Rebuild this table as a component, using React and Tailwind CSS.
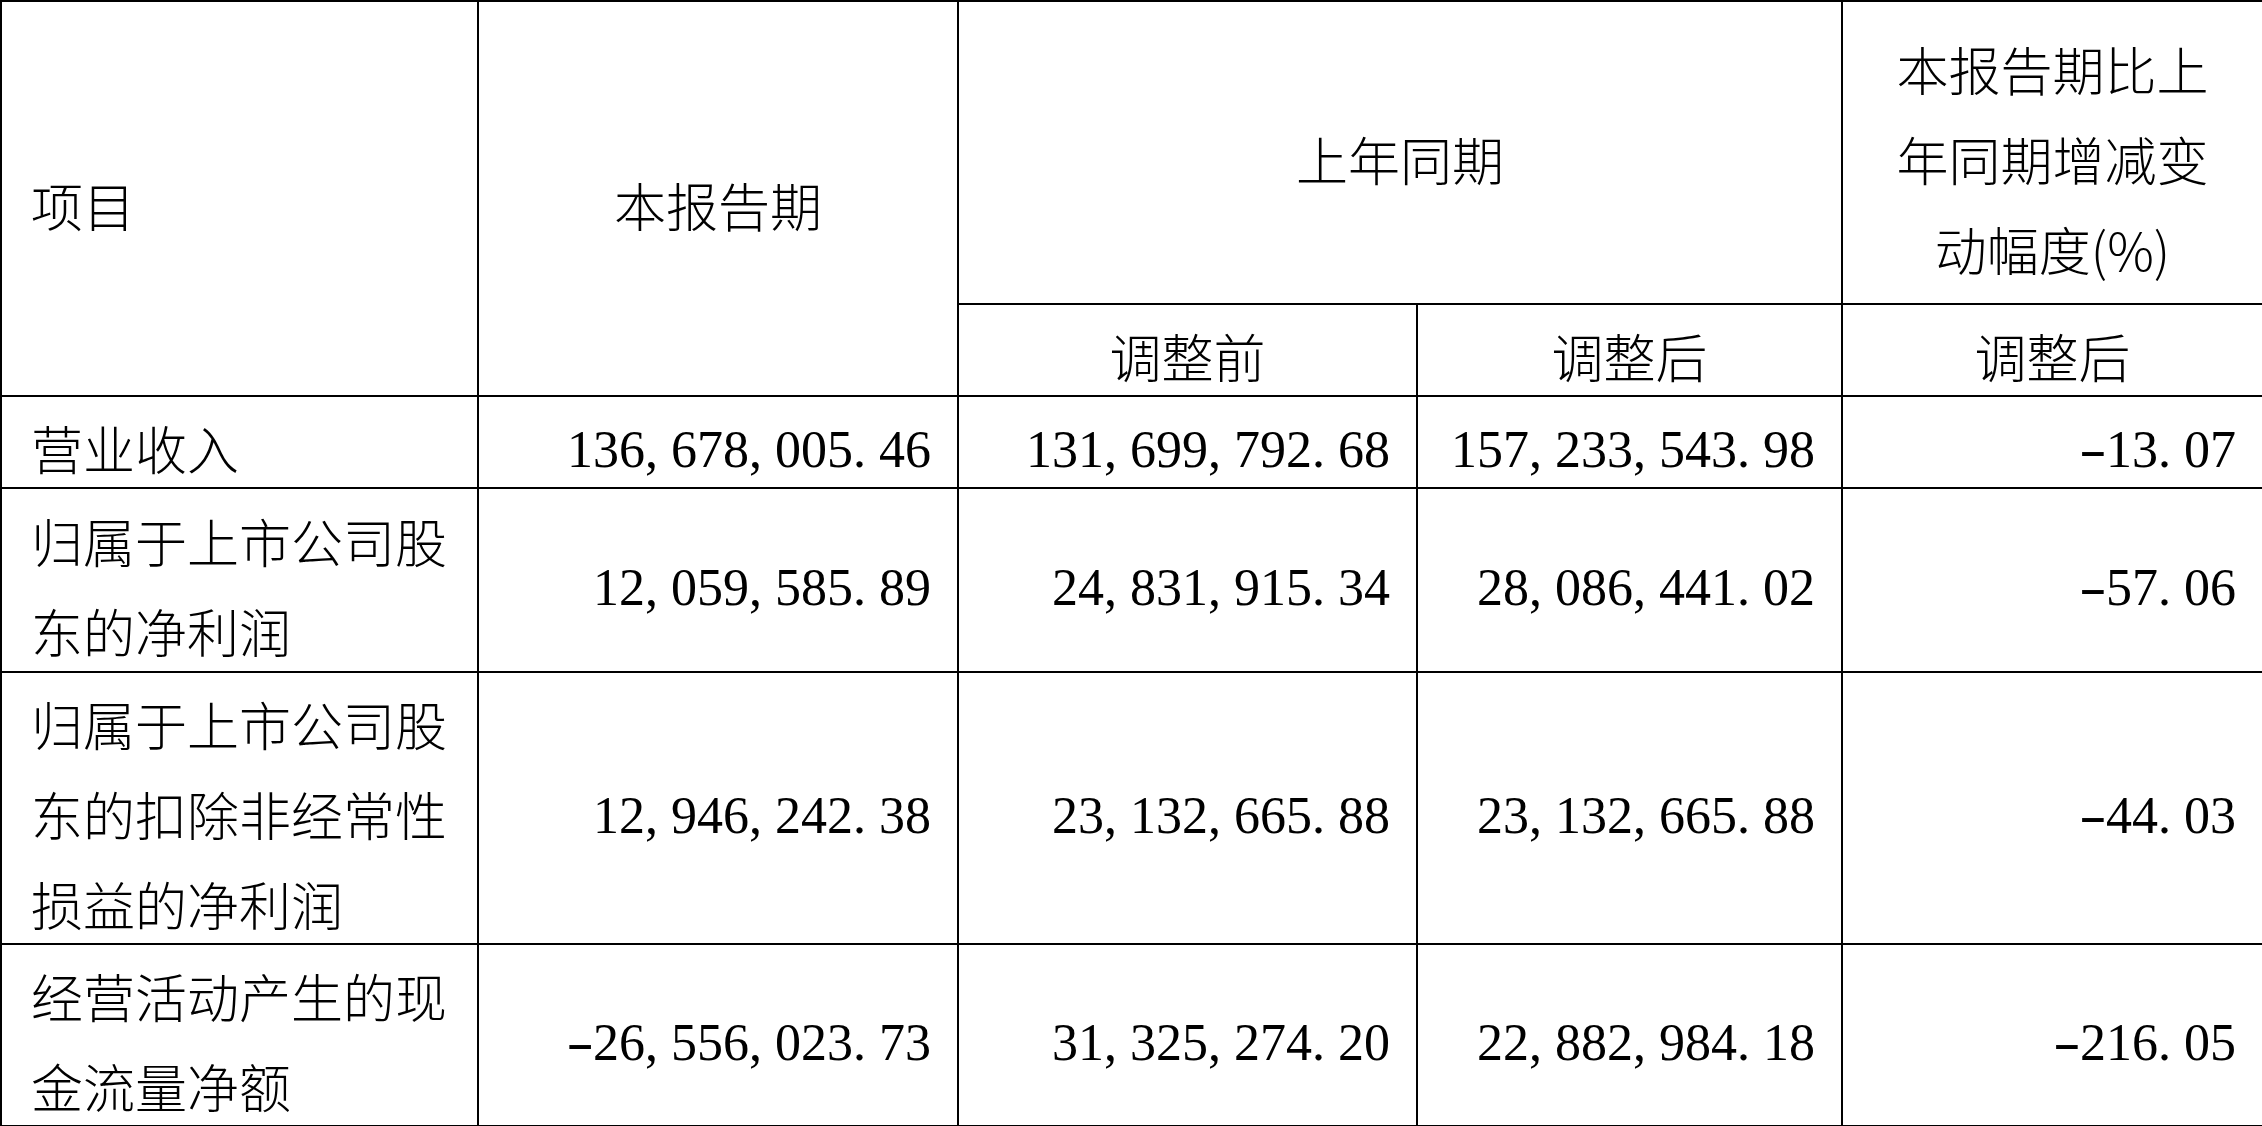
import React from "react";

const rows = [
  {
    label: "营业收入",
    h: "h-[92px]",
    values: ["136,678,005.46", "131,699,792.68", "157,233,543.98", "-13.07"],
  },
  {
    label: "归属于上市公司股东的净利润",
    h: "h-[184px]",
    values: ["12,059,585.89", "24,831,915.34", "28,086,441.02", "-57.06"],
  },
  {
    label: "归属于上市公司股东的扣除非经常性损益的净利润",
    h: "h-[271px]",
    values: ["12,946,242.38", "23,132,665.88", "23,132,665.88", "-44.03"],
  },
  {
    label: "经营活动产生的现金流量净额",
    h: "h-[182px]",
    values: ["-26,556,023.73", "31,325,274.20", "22,882,984.18", "-216.05"],
  },
];

// SimSun-style half-width punctuation: every char takes one digit width
function Num({ value }) {
  return (
    <span className="inline-block whitespace-nowrap translate-y-[8px]">
      {value.split("").map((c, i) =>
        c === "," || c === "." ? (
          <span key={i} className="inline-block w-[26px] text-left">
            {c}
          </span>
        ) : c === "-" ? (
          <span key={i} className="inline-block w-[26px] text-center scale-x-[1.6]">
            {c}
          </span>
        ) : (
          <span key={i}>{c}</span>
        )
      )}
    </span>
  );
}

const cjk = "font-['Noto_Sans_CJK_SC',sans-serif] font-light text-[52px] leading-[90px]";
const num = "font-['Liberation_Serif',serif] text-[52px] leading-[90px]";
const cell = "border-2 border-black align-middle p-0";

export default function App() {
  return (
    <div className="w-[2262px] h-[1126px] bg-white text-black overflow-hidden">
      <table className="table-fixed border-collapse w-[2262px]">
        <colgroup>
          <col className="w-[477px]" />
          <col className="w-[480px]" />
          <col className="w-[459px]" />
          <col className="w-[425px]" />
          <col className="w-[421px]" />
        </colgroup>
        <thead>
          <tr>
            <th rowSpan={2} className={`${cell} ${cjk} text-left pl-[29px]`}>
              <div className="translate-y-[6px]">项目</div>
            </th>
            <th rowSpan={2} className={`${cell} ${cjk} text-center`}>
              <div className="translate-y-[6px]">本报告期</div>
            </th>
            <th colSpan={2} className={`${cell} ${cjk} text-center h-[303px]`}>
              <div className="translate-y-[6px]">上年同期</div>
            </th>
            <th className={`${cell} ${cjk} text-center`}>
              <div className="translate-y-[6px]">
                本报告期比上
                <br />
                年同期增减变
                <br />
                动幅度(%)
              </div>
            </th>
          </tr>
          <tr>
            <th className={`${cell} ${cjk} text-center h-[92px]`}>
              <div className="translate-y-[6px]">调整前</div>
            </th>
            <th className={`${cell} ${cjk} text-center`}>
              <div className="translate-y-[6px]">调整后</div>
            </th>
            <th className={`${cell} ${cjk} text-center`}>
              <div className="translate-y-[6px]">调整后</div>
            </th>
          </tr>
        </thead>
        <tbody>
          {rows.map((r) => (
            <tr key={r.label}>
              <td className={`${cell} ${cjk} ${r.h} text-left pl-[29px] pr-[20px]`}>
                <div className="translate-y-[6px]">{r.label}</div>
              </td>
              {r.values.map((v, i) => (
                <td key={i} className={`${cell} ${num} text-right pr-[26px]`}>
                  <Num value={v} />
                </td>
              ))}
            </tr>
          ))}
        </tbody>
      </table>
    </div>
  );
}
